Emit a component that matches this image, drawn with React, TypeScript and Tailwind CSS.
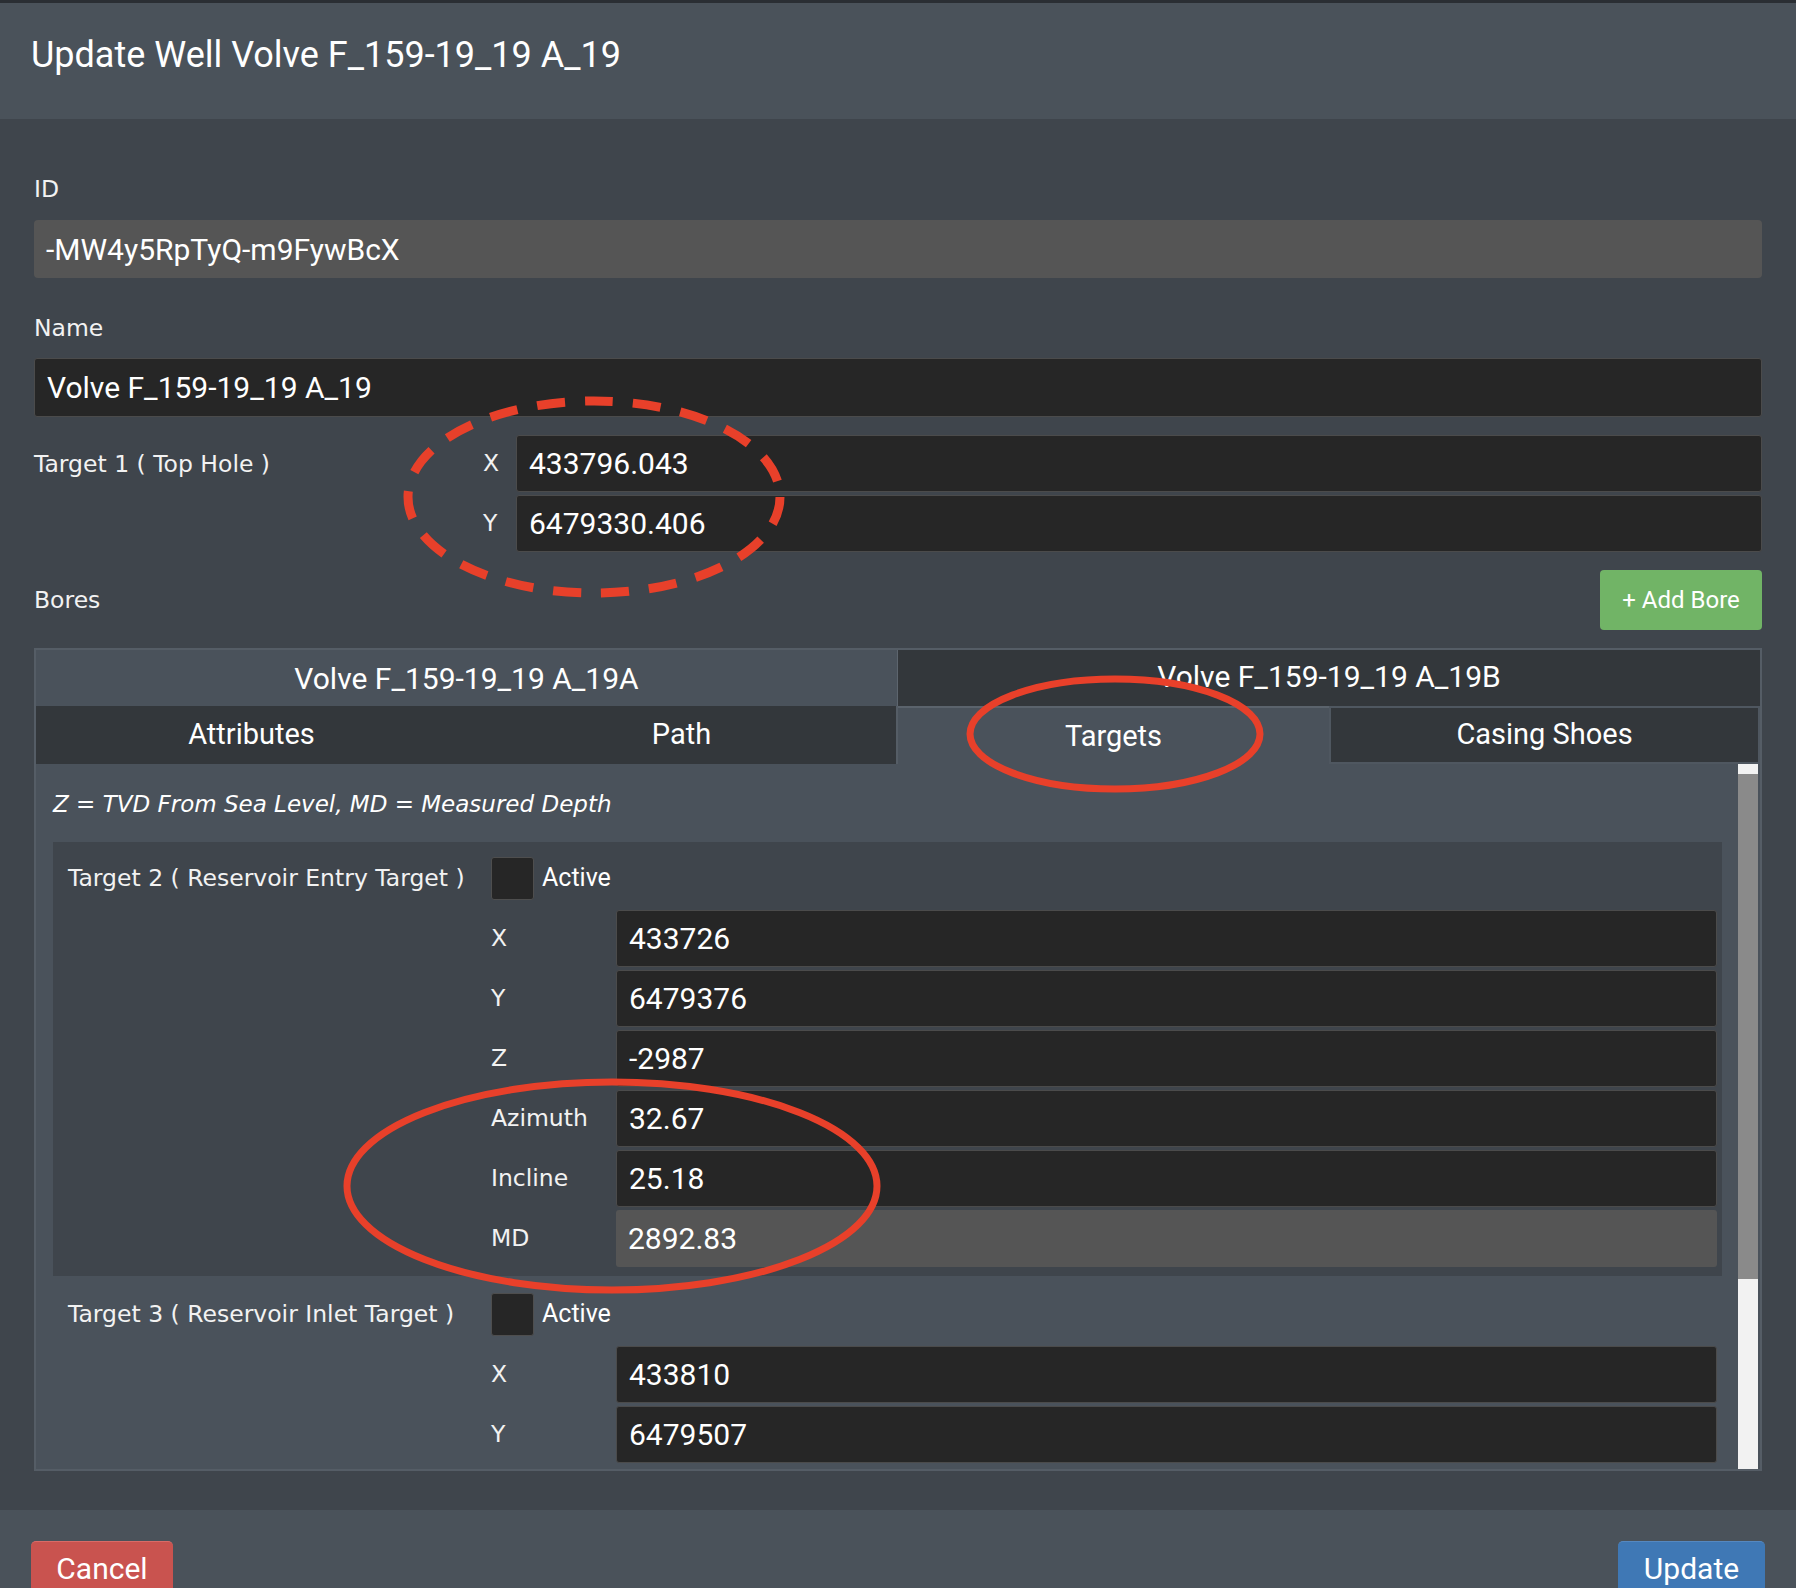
import React from 'react';

const label = "font-['DejaVu_Sans',sans-serif] text-[23.5px] text-[#f2f2f2]";
const roboto = "font-['Roboto',sans-serif]";

const Field: React.FC<{ value: string; readOnly?: boolean }> = ({ value, readOnly }) => (
    <div
        className={
            'flex-1 h-[57px] flex items-center pl-[12px] rounded-[3px] text-[30px] text-white ' +
            roboto +
            (readOnly ? ' bg-[#555555]' : ' bg-[#262626] border border-[#4b4b4b]')
        }
    >
        {value}
    </div>
);

const Checkbox: React.FC = () => (
    <div className="w-[43px] h-[43px] rounded-[3px] bg-[#262626] border border-[#4e4e4e]" />
);

// One target group: title, Active box, coordinate rows
const TargetBlock: React.FC<{
    title: string;
    rows: { k: string; v: string; ro?: boolean }[];
    dark?: boolean;
    top: string;
}> = ({ title, rows, dark, top }) => (
    <div className={'flex pl-[15px] pr-[5px] pb-[9px] ' + top + (dark ? ' bg-[#3f454c]' : '')}>
        <div className="w-[423px] h-[43px] flex items-center">
            <span className={label}>{title}</span>
        </div>
        <div className="flex-1 flex flex-col">
            <div className="flex items-center gap-[8px] h-[43px]">
                <Checkbox />
                <span className={roboto + ' text-[25px] text-white -mt-[2px]'}>Active</span>
            </div>
            <div className="flex flex-col gap-[3px] mt-[10px]">
                {rows.map((r) => (
                    <div key={r.k} className="flex items-center">
                        <span className={label + ' w-[125px]'}>{r.k}</span>
                        <Field value={r.v} readOnly={r.ro} />
                    </div>
                ))}
            </div>
        </div>
    </div>
);

export default function App() {
    return (
        <div className="relative w-[1796px] h-[1588px] overflow-hidden bg-[#3f454c]">
            {/* header */}
            <div className="h-[119px] border-t-[3px] border-[#2a2e33] bg-[#4a525a] flex items-center pl-[31px] pb-[12px]">
                <h1 className={roboto + ' text-[36px] text-white'}>Update Well Volve F_159-19_19 A_19</h1>
            </div>

            {/* body */}
            <div className="h-[1391px] px-[34px] pt-[56px]">
                <div className={label + ' leading-[28px]'}>ID</div>
                <div className={'mt-[17px] h-[58px] rounded-[4px] bg-[#555555] flex items-center pl-[12px] text-[30px] text-white ' + roboto}>
                    -MW4y5RpTyQ-m9FywBcX
                </div>

                <div className={label + ' leading-[28px] mt-[36px]'}>Name</div>
                <div className={'mt-[16px] h-[59px] rounded-[3px] bg-[#262626] border border-[#4b4b4b] flex items-center pl-[12px] text-[30px] text-white ' + roboto}>
                    Volve F_159-19_19 A_19
                </div>

                <div className="mt-[18px] flex">
                    <div className="w-[449px] h-[57px] flex items-center">
                        <span className={label + ' mt-[3px]'}>Target 1 ( Top Hole )</span>
                    </div>
                    <div className="flex-1 flex flex-col gap-[3px]">
                        <div className="flex items-center">
                            <span className={label + ' w-[33px]'}>X</span>
                            <Field value="433796.043" />
                        </div>
                        <div className="flex items-center">
                            <span className={label + ' w-[33px]'}>Y</span>
                            <Field value="6479330.406" />
                        </div>
                    </div>
                </div>

                <div className="mt-[18px] flex items-center justify-between h-[60px]">
                    <span className={label + ' mt-[2px]'}>Bores</span>
                    <button className={'h-[60px] w-[162px] rounded-[4px] bg-[#71b466] text-white text-[24px] ' + roboto}>
                        + Add Bore
                    </button>
                </div>

                {/* bore tabs */}
                <div className="mt-[18px] h-[823px] border-2 border-[#555d66] flex flex-col">
                    <div className={'grid grid-cols-2 h-[56px] text-[30px] text-white ' + roboto}>
                        <div className="bg-[#4a525b] border-r border-[#5d656e] flex items-center justify-center">
                            Volve F_159-19_19 A_19A
                        </div>
                        <div className="bg-[#33373b] flex items-center justify-center pb-[4px]">
                            Volve F_159-19_19 A_19B
                        </div>
                    </div>
                    <div className={'grid grid-cols-4 h-[58px] text-[29px] text-white ' + roboto}>
                        <div className="bg-[#33373b] flex items-center justify-center">Attributes</div>
                        <div className="bg-[#33373b] border-r-2 border-[#555d66] flex items-center justify-center">Path</div>
                        <div className="bg-[#4a525b] border-t-2 border-[#5b636c] flex items-center justify-center pt-[2px]">Targets</div>
                        <div className="bg-[#33373b] border-2 border-[#4f5760] flex items-center justify-center">Casing Shoes</div>
                    </div>

                    {/* scroll area */}
                    <div className="flex-1 flex bg-[#4a525b] overflow-hidden">
                        <div className="flex-1 pl-[17px] pr-[16px]">
                            <div className="pt-[27px] leading-[26px] italic font-['DejaVu_Sans',sans-serif] text-[23px] text-white">
                                Z = TVD From Sea Level, MD = Measured Depth
                            </div>
                            <TargetBlock
                                title="Target 2 ( Reservoir Entry Target )"
                                dark
                                top="mt-[25px] pt-[15px]"
                                rows={[
                                    { k: 'X', v: '433726' },
                                    { k: 'Y', v: '6479376' },
                                    { k: 'Z', v: '-2987' },
                                    { k: 'Azimuth', v: '32.67' },
                                    { k: 'Incline', v: '25.18' },
                                    { k: 'MD', v: '2892.83', ro: true },
                                ]}
                            />
                            <TargetBlock
                                title="Target 3 ( Reservoir Inlet Target )"
                                top="pt-[17px]"
                                rows={[
                                    { k: 'X', v: '433810' },
                                    { k: 'Y', v: '6479507' },
                                ]}
                            />
                        </div>
                        <div className="w-[20px] mr-[2px] flex flex-col bg-[#f2f2f2]">
                            <div className="mt-[10px] h-[505px] bg-[#8a8a8a]" />
                        </div>
                    </div>
                </div>
            </div>

            {/* footer */}
            <div className="h-[78px] bg-[#4a525a] flex justify-between px-[31px] pt-[31px]">
                <button className={'h-[62px] w-[142px] rounded-[5px] bg-[#c9534f] border-t border-[#d96b67] text-white text-[30px] pb-[8px] ' + roboto}>
                    Cancel
                </button>
                <button className={'h-[62px] w-[147px] rounded-[5px] bg-[#3f78b5] border-t border-[#5588c0] text-white text-[30px] pb-[8px] ' + roboto}>
                    Update
                </button>
            </div>

            {/* red annotation marks */}
            <svg className="absolute inset-0 pointer-events-none" width="1796" height="1588" viewBox="0 0 1796 1588">
                <ellipse cx="594" cy="497" rx="186" ry="96" fill="none" stroke="#e8402a" strokeWidth="9" strokeDasharray="28 20" />
                <ellipse cx="1115" cy="734" rx="145" ry="55" fill="none" stroke="#e8402a" strokeWidth="7" />
                <ellipse cx="612" cy="1186" rx="265" ry="104" fill="none" stroke="#e8402a" strokeWidth="7" />
            </svg>
        </div>
    );
}
